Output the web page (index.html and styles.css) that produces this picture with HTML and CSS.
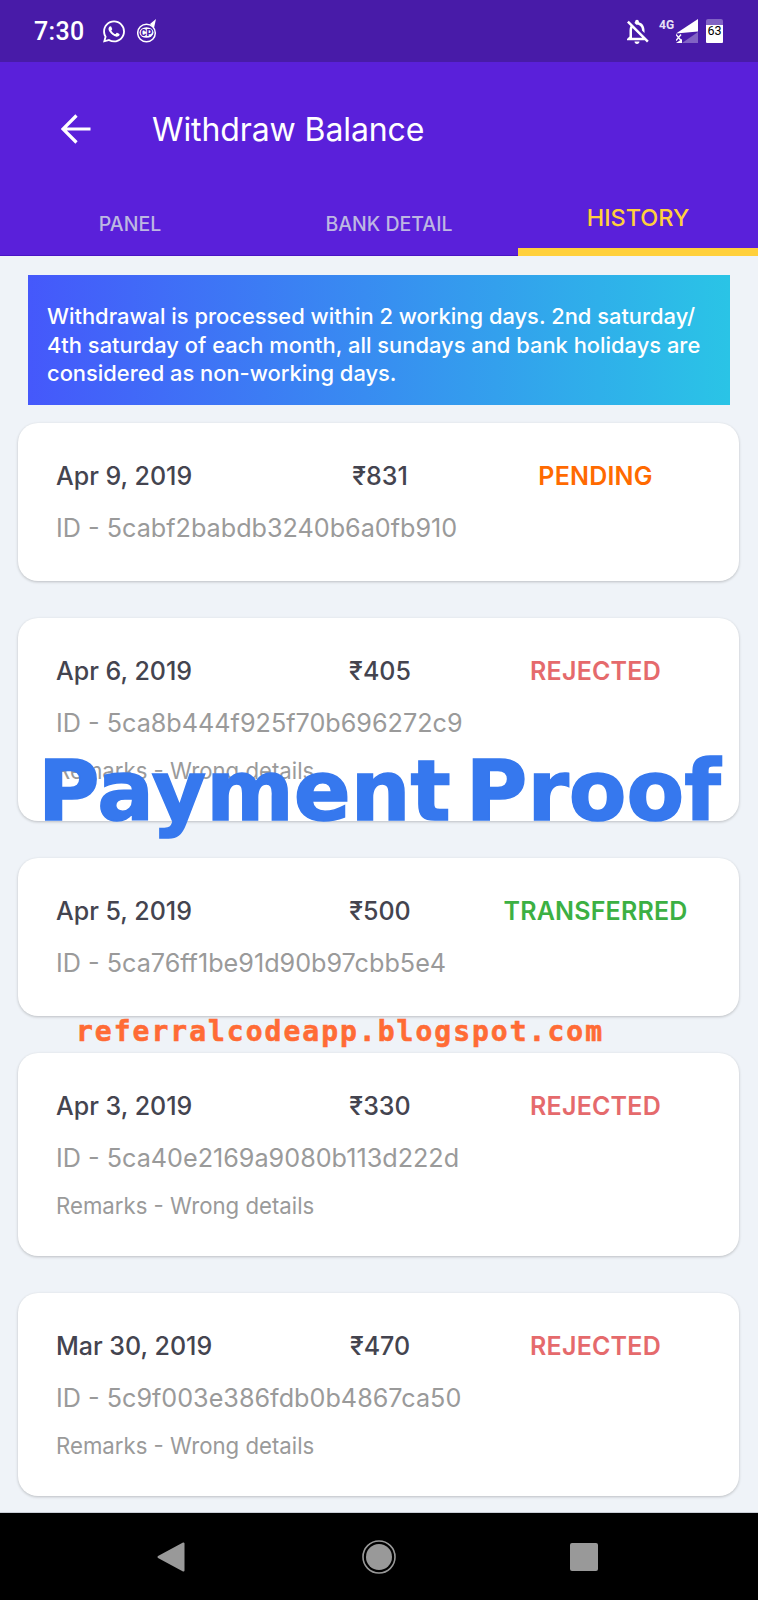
FILE: index.html
```html
<!DOCTYPE html>
<html lang="en">
<head>
<meta charset="utf-8">
<title>Withdraw Balance</title>
<link rel="stylesheet" href="styles.css">
</head>
<body>
<div class="app">
  <header class="header">
    <div class="status">
      <span class="time">7:30</span>
      <svg class="ic-wa" viewBox="0 0 24 24"><path fill="#fff" d="M17.472 14.382c-.297-.149-1.758-.867-2.03-.967-.273-.099-.471-.148-.67.15-.197.297-.767.966-.94 1.164-.173.199-.347.223-.644.075-.297-.15-1.255-.463-2.39-1.475-.883-.788-1.48-1.761-1.653-2.059-.173-.297-.018-.458.13-.606.134-.133.298-.347.446-.52.149-.174.198-.298.298-.497.099-.198.05-.371-.025-.52-.075-.149-.669-1.612-.916-2.207-.242-.579-.487-.5-.669-.51-.173-.008-.371-.01-.57-.01-.198 0-.52.074-.792.372-.272.297-1.04 1.016-1.04 2.479 0 1.462 1.065 2.875 1.213 3.074.149.198 2.096 3.2 5.077 4.487.709.306 1.262.489 1.694.625.712.227 1.36.195 1.871.118.571-.085 1.758-.719 2.006-1.413.248-.694.248-1.289.173-1.413-.074-.124-.272-.198-.57-.347m-5.421 7.403h-.004a9.87 9.87 0 01-5.031-1.378l-.361-.214-3.741.982.998-3.648-.235-.374a9.86 9.86 0 01-1.51-5.26c.001-5.45 4.436-9.884 9.888-9.884 2.64 0 5.122 1.03 6.988 2.898a9.825 9.825 0 012.893 6.994c-.003 5.45-4.437 9.884-9.885 9.884m8.413-18.297A11.815 11.815 0 0012.05 0C5.495 0 .16 5.335.157 11.892c0 2.096.547 4.142 1.588 5.945L.057 24l6.305-1.654a11.882 11.882 0 005.683 1.448h.005c6.554 0 11.89-5.335 11.893-11.893a11.821 11.821 0 00-3.48-8.413z"/></svg>
      <svg class="ic-cp" viewBox="0 0 20 24"><circle cx="9.5" cy="14" r="8.8" fill="none" stroke="#fff" stroke-width="1.5"/><path fill="#fff" d="M13 5l6-5-2 9z"/><ellipse cx="9.5" cy="13.5" rx="7" ry="5.2" fill="#fff"/><text x="9.5" y="16.6" class="cp-text">CP</text></svg>
      <div class="status-right">
        <svg class="ic-bell" viewBox="2.5 2 19 20"><path fill="#fff" d="M12 22c1.1 0 2-.9 2-2h-4c0 1.1.9 2 2 2zm0-15.5c2.49 0 4 2.02 4 4.5v.1l2 2V11c0-3.07-1.63-5.64-4.5-6.32V4c0-.83-.67-1.5-1.5-1.5s-1.5.67-1.5 1.5v.68c-.24.06-.47.15-.69.23l1.64 1.64c.18-.02.36-.05.55-.05zM5.41 3.35L4 4.76l2.81 2.81C6.29 8.57 6 9.74 6 11v5l-2 2v1h14.24l1.74 1.74 1.41-1.41L5.41 3.35zM16 17H8v-6c0-.68.12-1.32.34-1.9L16 16.76V17z"/></svg>
        <span class="net">4G</span>
        <svg class="ic-signal" viewBox="0 0 22 24"><path fill="#fff" d="M0 14.5L22 0v12.5L0 14.5z"/><path fill="#8163c4" d="M6 24L22 13v11z"/><path fill="#fff" d="M0 24l6-4v4z"/><path d="M0 15.5l5 6M5 15.5l-5 6" stroke="#fff" stroke-width="1.4"/></svg>
        <div class="battery"><span class="battery-cap"></span><span class="battery-body">63</span></div>
      </div>
    </div>
    <div class="toolbar">
      <svg class="ic-back" viewBox="0 0 30 30"><path d="M29.5 15H2.5M15.5 1.5L2 15l13.5 13.5" fill="none" stroke="#fff" stroke-width="3.2"/></svg>
      <h1 class="title">Withdraw Balance</h1>
    </div>
    <nav class="tabs">
      <div class="tab tab-one">PANEL</div>
      <div class="tab tab-two">BANK DETAIL</div>
      <div class="tab tab-active">HISTORY</div>
    </nav>
  </header>

  <main class="main">
    <div class="banner">Withdrawal is processed within 2 working days. 2nd saturday/<br>4th saturday of each month, all sundays and bank holidays are<br>considered as non-working days.</div>

    <section class="card">
      <div class="row"><span class="date">Apr 9, 2019</span><span class="amount">₹831</span><span class="st pending">PENDING</span></div>
      <div class="id">ID - 5cabf2babdb3240b6a0fb910</div>
    </section>
    <section class="card">
      <div class="row"><span class="date">Apr 6, 2019</span><span class="amount">₹405</span><span class="st rejected">REJECTED</span></div>
      <div class="id">ID - 5ca8b444f925f70b696272c9</div>
      <div class="remarks">Remarks - Wrong details</div>
    </section>
    <section class="card">
      <div class="row"><span class="date">Apr 5, 2019</span><span class="amount">₹500</span><span class="st transferred">TRANSFERRED</span></div>
      <div class="id">ID - 5ca76ff1be91d90b97cbb5e4</div>
    </section>
    <section class="card">
      <div class="row"><span class="date">Apr 3, 2019</span><span class="amount">₹330</span><span class="st rejected">REJECTED</span></div>
      <div class="id">ID - 5ca40e2169a9080b113d222d</div>
      <div class="remarks">Remarks - Wrong details</div>
    </section>
    <section class="card">
      <div class="row"><span class="date">Mar 30, 2019</span><span class="amount">₹470</span><span class="st rejected">REJECTED</span></div>
      <div class="id">ID - 5c9f003e386fdb0b4867ca50</div>
      <div class="remarks">Remarks - Wrong details</div>
    </section>
  </main>

  <footer class="navbar">
    <svg class="nav-back" viewBox="0 0 28 30"><path fill="#999" stroke="#999" stroke-width="2" stroke-linejoin="round" d="M1.5 15L26.5 1.5v27z"/></svg>
    <svg class="nav-home" viewBox="0 0 34 34"><circle cx="17" cy="17" r="16" fill="none" stroke="#999" stroke-width="1.6"/><circle cx="17" cy="17" r="13" fill="#999"/></svg>
    <span class="nav-square"></span>
  </footer>

  <div class="wm-proof">Payment Proof</div>
  <div class="wm-site">referralcodeapp.blogspot.com</div>
</div>
</body>
</html>
```
FILE: styles.css
```css
* { box-sizing: border-box; }
html, body { margin: 0; padding: 0; }
body { background: #eff3f8; font-family: Inter, "Open Sans", sans-serif; }
.app { position: relative; width: 758px; height: 1600px; overflow: hidden; display: flex; flex-direction: column; }

.header { background: #5a20da; height: 256px; flex: none; }
.status { height: 62px; background: #481ba8; display: flex; align-items: center; padding: 0 35px 0 34px; color: #fff; }
.time { font-family: Roboto, sans-serif; font-weight: 500; font-size: 25px; width: 69px; letter-spacing: .3px; }
.ic-wa { width: 22px; height: 23px; margin-right: 12px; }
.ic-cp { width: 20px; height: 24px; }
.cp-text { font-family: Roboto, sans-serif; font-weight: 900; font-size: 9px; fill: #481ba8; text-anchor: middle; }
.status-right { margin-left: auto; display: flex; align-items: center; }
.ic-bell { width: 24px; height: 25px; margin-right: 10px; }
.net { font-family: Roboto, sans-serif; font-weight: 700; font-size: 12px; width: 17px; align-self: flex-start; line-height: 13px; color: #e8e2f6; }
.ic-signal { width: 22px; height: 24px; margin-right: 8px; }
.battery { width: 17px; height: 24px; display: flex; flex-direction: column; align-items: center; }
.battery-cap { width: 17px; height: 6px; background: #8163c4; border-radius: 2px 2px 0 0; }
.battery-body { width: 17px; height: 18px; background: #fff; color: #000; font-family: Roboto, sans-serif; font-size: 12.5px; line-height: 12px; text-align: center; border-radius: 0 0 1px 1px; }

.toolbar { height: 128px; padding: 6px 0 0 61px; display: flex; align-items: center; gap: 61px; }
.ic-back { width: 30px; height: 30px; flex: none; }
.title { margin: 0; font-size: 32px; font-weight: 400; color: #fff; letter-spacing: -.1px; }

.tabs { height: 66px; display: grid; grid-template-columns: 260px 258px 240px; align-items: end; box-shadow: inset 0 -1px #4a14c4; }
.tab { text-align: center; font-size: 19.5px; font-weight: 500; line-height: 24px; color: #bdb7e2; padding-bottom: 20px; }
.tab-active { font-size: 23.5px; line-height: 28px; color: #ffd03c; border-bottom: 8px solid #ffd03c; padding-bottom: 16px; }

.main { flex: 1; min-height: 0; display: flex; flex-direction: column; gap: 37px; padding-top: 19px; overflow: hidden; }
.banner { height: 130px; margin: 0 28px -19px 28px; flex: none; padding: 27px 0 0 19px; color: #fff; font-size: 21.9px; font-weight: 500; line-height: 28.5px; white-space: nowrap; background: linear-gradient(90deg, #4558fb, #2ac4e6); }

.card { flex: none; margin: 0 19px 0 18px; padding: 36px 8px 37px 38px; background: #fff; border-radius: 20px; box-shadow: 0 1px 3px rgba(0, 0, 0, .22); }
.row { display: grid; grid-template-columns: 244px 160px 1fr; align-items: center; height: 34px; font-size: 25px; font-weight: 500; color: #44444f; }
.amount, .st { text-align: center; }
.st { letter-spacing: .2px; font-weight: 600; }
.pending { color: #ff6a00; }
.rejected { color: #e56a6c; }
.transferred { color: #3cb043; }
.id { margin-top: 17px; height: 34px; line-height: 36px; font-size: 25.2px; color: #9a9a9a; }
.remarks { margin-top: 17px; height: 28px; line-height: 30px; font-size: 22.2px; color: #9a9a9a; }

.navbar { height: 88px; flex: none; background: #000; display: flex; align-items: center; justify-content: space-between; padding: 0 160px 0 157px; border-top: 1px solid #c9ced6; }
.nav-back { width: 28px; height: 30px; }
.nav-home { width: 34px; height: 34px; margin-left: 3px; }
.nav-square { width: 28px; height: 28px; background: #999; border-radius: 2px; }

.wm-proof, .wm-site { position: absolute; font-family: "DejaVu Sans", sans-serif; font-weight: 700; white-space: nowrap; }
.wm-proof { left: 38px; top: 740px; font-size: 84px; line-height: 102px; word-spacing: -14px; color: #3678ee; -webkit-text-stroke: 1.5px #3678ee; }
.wm-site { left: 76px; top: 1015px; font-family: "DejaVu Sans Mono", monospace; font-size: 28px; line-height: 34px; letter-spacing: 2px; color: #ff6b35; -webkit-text-stroke: .6px #ff6b35; }
```
